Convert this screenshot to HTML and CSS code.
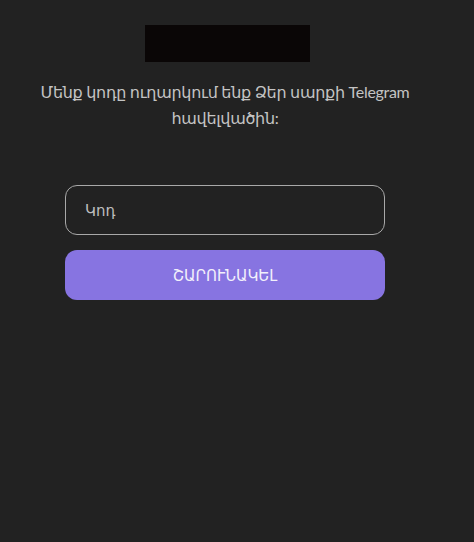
FILE: index.html
```html
<!DOCTYPE html>
<html lang="hy">
<head>
<meta charset="utf-8">
<link rel="stylesheet" href="styles.css">
</head>
<body>
<main class="page">
  <div class="logo"></div>
  <p class="info">Մենք կոդը ուղարկում ենք Ձեր սարքի Telegram հավելվածին:</p>
  <form class="form">
    <input class="code" type="text" placeholder="Կոդ">
    <button class="submit" type="button">ՇԱՐՈՒՆԱԿԵԼ</button>
  </form>
</main>
</body>
</html>
```
FILE: styles.css
```css
html, body {
  margin: 0;
  padding: 0;
  background: #222222;
  height: 100%;
}
body {
  font-family: Lato, "DejaVu Sans", sans-serif;
  color: #c4c4c4;
}
.page {
  width: 450px;
  display: flex;
  flex-direction: column;
  align-items: center;
  padding-top: 25px;
}
.logo {
  width: 165px;
  height: 37px;
  background: #0a0606;
  margin-left: 5px;
}
.info {
  margin: 17px 0 0;
  width: 400px;
  text-align: center;
  font-size: 16px;
  line-height: 26px;
  letter-spacing: -0.3px;
  color: #c4c4c4;
}
.form {
  margin-top: 54px;
  display: flex;
  flex-direction: column;
  gap: 15px;
  width: 320px;
}
.code {
  box-sizing: border-box;
  width: 320px;
  height: 50px;
  border: 1px solid #a9a9a9;
  border-radius: 12px;
  background: #222222;
  padding: 0 19px;
  font-family: Lato, "DejaVu Sans", sans-serif;
  font-size: 15px;
  color: #d0d0d0;
  outline: none;
}
.code::placeholder {
  color: #bdbdbd;
}
.submit {
  width: 320px;
  height: 50px;
  border: none;
  border-radius: 12px;
  background: #8774e1;
  color: #f2f0fb;
  font-family: Lato, "DejaVu Sans", sans-serif;
  font-size: 15px;
  cursor: pointer;
}
```
